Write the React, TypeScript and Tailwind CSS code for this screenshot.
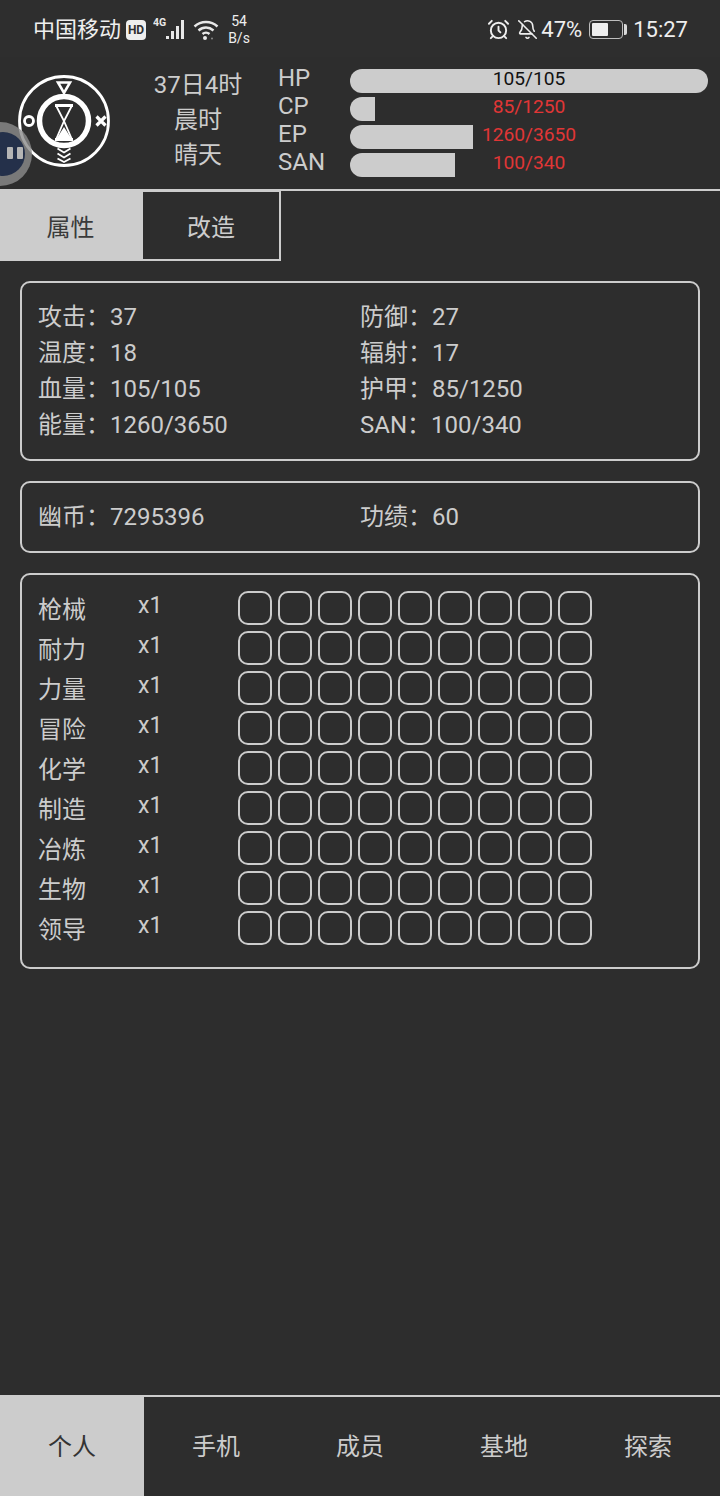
import { AlarmClock, BellOff } from "lucide-react";

const stats = [
  ["攻击：37", "防御：27"],
  ["温度：18", "辐射：17"],
  ["血量：105/105", "护甲：85/1250"],
  ["能量：1260/3650", "SAN：100/340"],
];

const bars = [
  { label: "HP", value: "105/105", width: 358, full: true },
  { label: "CP", value: "85/1250", width: 25, full: false },
  { label: "EP", value: "1260/3650", width: 123, full: false },
  { label: "SAN", value: "100/340", width: 105, full: false },
];

const skills = ["枪械", "耐力", "力量", "冒险", "化学", "制造", "冶炼", "生物", "领导"];
const slots = [1, 2, 3, 4, 5, 6, 7, 8, 9];
const navItems = ["个人", "手机", "成员", "基地", "探索"];

const Logo = () => (
  <svg width="96" height="96" viewBox="0 0 96 96" fill="none" stroke="#fff" className="mt-[2px] shrink-0">
    <circle cx="48" cy="48" r="44.5" strokeWidth="2.8" />
    <circle cx="48" cy="48" r="24.5" strokeWidth="5.5" />
    <path d="M42 9.500h12L48 20z" strokeWidth="2.6" />
    <circle cx="13" cy="48" r="4.500" strokeWidth="2.800" />
    <path d="M80.500 43.500l9 9M89.500 43.500l-9 9" strokeWidth="3.200" />
    <path d="M41.500 75.500l6.500 4 6.500-4M41.500 80.500l6.500 4 6.500-4M41.500 85.500l6.500 3.500 6.500-3.500" strokeWidth="1.800" />
    <path d="M39 32.500h18M39 66.500h18" strokeWidth="2.800" />
    <path d="M40 32.500L48 48L40 66.500M56 32.500L48 48L56 66.500" strokeWidth="1.800" />
    <path d="M48 54l7 11H41z" fill="#fff" strokeWidth="0" />
  </svg>
);

const SignalIcon = () => (
  <svg width="36" height="26" viewBox="0 0 36 26">
    <text x="0" y="9" fill="#e8e8e8" fontSize="10.500" fontWeight="700" fontFamily="Roboto, sans-serif">
      4G
    </text>
    <rect x="13" y="19" width="3" height="3" fill="#e8e8e8" />
    <rect x="18" y="14" width="3" height="8" fill="#e8e8e8" />
    <rect x="23" y="9" width="3" height="13" fill="#e8e8e8" />
    <rect x="28" y="3" width="3" height="19" fill="#e8e8e8" />
  </svg>
);

const WifiIcon = () => (
  <svg width="26" height="22" viewBox="0 0 26 22" fill="none" stroke="#e8e8e8" strokeWidth="2.400">
    <path d="M1.500 7.500c6.500-6 16.500-6 23 0" />
    <path d="M5.500 11.500c4.500-4 10.500-4 15 0" />
    <path d="M9.500 15c2-1.800 5-1.800 7 0" />
    <circle cx="12" cy="19" r="2" fill="#e8e8e8" stroke="none" />
    <circle cx="19" cy="19.500" r="1" fill="#8a8a8a" stroke="none" />
  </svg>
);

const BatteryIcon = () => (
  <div className="flex items-center gap-[1px]">
    <div className="flex h-[19px] w-[34px] items-center rounded-[4px] border border-[#bdbdbd] p-[2px]">
      <div className="h-full w-[16px] rounded-[1px] bg-[#eeeeee]" />
    </div>
    <div className="h-[11px] w-[3px] rounded-r-[2px] bg-[#d8d8d8]" />
  </div>
);

const StatusBar = () => (
  <div className="flex h-[57px] items-center justify-between bg-[#2e2e2e] pl-[33px] pr-[32px] pt-[2px] text-[#eeeeee]">
    <div className="flex items-center">
      <span className="text-[22px] leading-none">中国移动</span>
      <span className="ml-[5px] flex h-[20px] w-[20px] items-center justify-center rounded-[4px] bg-[#eeeeee] text-[12px] font-bold leading-none text-[#2e2e2e]">
        HD
      </span>
      <span className="ml-[7px] flex">
        <SignalIcon />
      </span>
      <span className="ml-[4px] flex">
        <WifiIcon />
      </span>
      <div className="ml-[7px] flex w-[26px] flex-col items-center text-[14px] leading-[17px]">
        <span>54</span>
        <span>B/s</span>
      </div>
    </div>
    <div className="flex items-center">
      <AlarmClock size={23} strokeWidth={2} />
      <BellOff size={21} strokeWidth={1.8} className="ml-[7px]" />
      <span className="ml-[3px] text-[22px] leading-none">47%</span>
      <span className="ml-[7px] flex">
        <BatteryIcon />
      </span>
      <span className="ml-[6px] text-[22px] leading-none">15:27</span>
    </div>
  </div>
);

const Header = () => (
  <div className="relative flex h-[132px] items-center pb-[6px] pl-[16px]">
    <Logo />
    <div className="ml-[26px] flex w-[120px] flex-col items-center text-[24px] leading-[35px] text-[#cccccc]">
      <span>37日4时</span>
      <span>晨时</span>
      <span>晴天</span>
    </div>
    <div className="ml-[20px] flex flex-col gap-[4px] pt-[6px]">
      {bars.map((bar) => (
        <div key={bar.label} className="flex h-[24px] items-center">
          <span className="w-[72px] pb-[6px] text-[24px] leading-none text-[#cccccc]">{bar.label}</span>
          <div className="relative h-[24px] w-[358px]">
            <div
              className={bar.full ? "h-full rounded-[12px] bg-[#cccccc]" : "h-full rounded-l-[12px] bg-[#cccccc]"}
              style={{ width: bar.width }}
            />
            <span
              className={
                bar.full
                  ? "absolute inset-0 text-center text-[19.2px] leading-[20px] text-[#111111]"
                  : "absolute inset-0 text-center text-[19.2px] leading-[20px] text-[#e03636]"
              }
            >
              {bar.value}
            </span>
          </div>
        </div>
      ))}
    </div>
    {/* floating assistant bubble */}
    <div className="absolute left-[-32px] top-[65px] flex h-[64px] w-[64px] items-center justify-center rounded-full bg-[#8c8c8c]/80 pl-[6px]">
      <div className="flex h-[44px] w-[44px] items-center justify-center gap-[4px] rounded-full bg-[#24304a] pl-[24px]">
        <div className="mt-[-2px] h-[12px] w-[6px] shrink-0 rounded-[1px] bg-[#b5b5b5]" />
        <div className="mt-[-2px] h-[12px] w-[6px] shrink-0 rounded-[1px] bg-[#b5b5b5]" />
      </div>
    </div>
  </div>
);

const Tabs = () => (
  <div className="flex h-[72px] border-t-2 border-[#cccccc]">
    <div className="flex h-[70px] w-[141px] items-center justify-center bg-[#cccccc] pt-[4px] text-[24px] text-[#3a3a3a]">
      属性
    </div>
    <div className="flex h-[70px] w-[140px] items-center justify-center border-2 border-t-[1px] border-[#cccccc] pt-[4px] text-[24px] text-[#cccccc]">
      改造
    </div>
  </div>
);

const StatRow = ({ left, right }: { left: string; right: string }) => (
  <div className="grid grid-cols-2 text-[24px] leading-[36px] text-[#cccccc]">
    <span>{left}</span>
    <span>{right}</span>
  </div>
);

const Card = ({ className, children }: { className: string; children: React.ReactNode }) => (
  <div className={"mx-[20px] rounded-[10px] border-2 border-[#cccccc] pl-[16px] pr-[16px] " + className}>{children}</div>
);

const SkillRow = ({ name }: { name: string }) => (
  <div className="flex h-[40px] items-start text-[#cccccc]">
    <span className="w-[100px] text-[24px] leading-[39px]">{name}</span>
    <span className="w-[100px] text-[23px] leading-[30px]">x1</span>
    <div className="flex gap-[6px]">
      {slots.map((slot) => (
        <div key={slot} className="h-[34px] w-[34px] rounded-[10px] border-2 border-[#cccccc]" />
      ))}
    </div>
  </div>
);

const BottomNav = () => (
  <div className="grid h-[101px] grid-cols-5 border-t-2 border-[#cccccc]">
    {navItems.map((item, i) => (
      <div
        key={item}
        className={
          i === 0
            ? "flex items-center justify-center bg-[#cccccc] text-[24px] text-[#333333]"
            : "flex items-center justify-center text-[24px] text-[#cccccc]"
        }
      >
        {item}
      </div>
    ))}
  </div>
);

export default function App() {
  return (
    <div
      lang="zh-CN"
      className="flex h-[1496px] w-[720px] flex-col overflow-hidden bg-[#2d2d2d] font-['Roboto','Noto_Sans_CJK_SC',sans-serif]"
    >
      <StatusBar />
      <Header />
      <Tabs />
      <div className="flex flex-1 flex-col gap-[20px] pt-[20px]">
        <Card className="py-[16px]">
          {stats.map(([left, right]) => (
            <StatRow key={left} left={left} right={right} />
          ))}
        </Card>
        <Card className="py-[16px]">
          <StatRow left="幽币：7295396" right="功绩：60" />
        </Card>
        <Card className="pb-[16px] pt-[16px]">
          {skills.map((name) => (
            <SkillRow key={name} name={name} />
          ))}
        </Card>
      </div>
      <BottomNav />
    </div>
  );
}
